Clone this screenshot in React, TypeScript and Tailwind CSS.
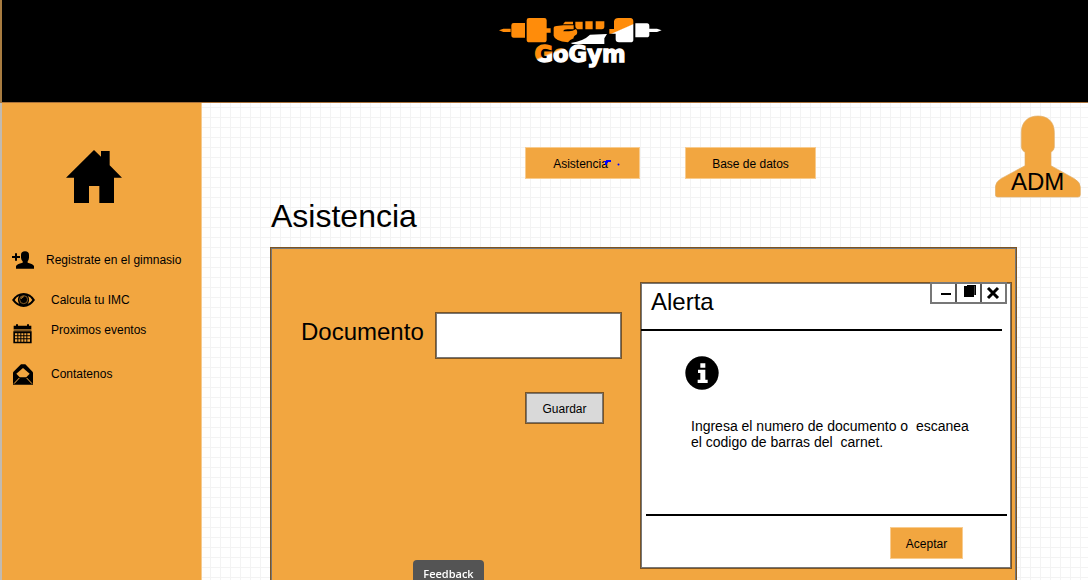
import React from "react";

function Logo() {
  return (
    <svg viewBox="0 0 540 192" className="h-16 w-[180px]" role="img" aria-label="GoGym">
      <defs>
        <linearGradient id="word" gradientUnits="userSpaceOnUse" x1="160" y1="96" x2="200" y2="190">
          <stop offset="0.42" stopColor="#ff8c0a" />
          <stop offset="0.48" stopColor="#fff" />
        </linearGradient>
        <linearGradient id="plate" gradientUnits="userSpaceOnUse" x1="388" y1="40" x2="410" y2="90">
          <stop offset="0.42" stopColor="#ff8c0a" />
          <stop offset="0.48" stopColor="#fff" />
        </linearGradient>
      </defs>
      <g fill="#ff8c0a">
        <path d="M27 67 40 62H62V72H40ZM64 52Q64 45 71 45H105V89H71Q64 89 64 81ZM110 37Q110 30 117 30H163Q170 30 170 37V61H182V74H170V96Q170 103 162 103H118Q110 103 110 96Z" />
        <path d="M191 61Q191 54 200 54L220 52H251V64H233Q220 64 220 70H237Q248 70 258 63Q265 73 259 80Q249 85 251 91Q239 95 234 103Q194 99 191 83Z" />
        <path d="M225 41H249V49H219ZM256 41H278V64H262Q256 61 256 55ZM286 40H308V64H286ZM317 40H343V58Q342 64 336 64H317Z" />
      </g>
      <path fill="#fff" d="M242 105Q281 99 300 80L351 78 343 91V108H248Z" />
      <path fill="url(#plate)" d="M358 63H372V40Q374 30 385 30H421Q430 31 430 40V96Q430 103 421 103H387Q377 103 377 94V77H358Z" />
      <path fill="#fff" d="M436 46H471Q478 46 478 54V62H501L515 67 501 72H478V81Q478 88 470 88H436Z" />
      <text x="270" y="163" textAnchor="middle" fontFamily="DejaVu Sans, sans-serif" fontWeight="700" fontSize="68" fill="url(#word)" stroke="url(#word)" strokeWidth="4">GoGym</text>
    </svg>
  );
}

function HomeIcon() {
  return (
    <svg viewBox="0 0 168 159" className="h-[53px] w-14" aria-hidden="true">
      <path d="M84 0 105 20V3H131V46L168 83H144V159H100V108H69V159H24V83H0Z" />
    </svg>
  );
}

function AddUserIcon() {
  return (
    <svg viewBox="0 0 66 54" className="h-[18px] w-[22px]" aria-hidden="true">
      <path d="M0 15H9V7H15V15H24V21H15V29H9V21H0ZM27 12Q27 1 39 1T51 12V20Q50 28 47 31V35Q64 39 66 45V53H12V45Q14 39 32 35V31Q28 28 27 20Z" />
    </svg>
  );
}

function EyeIcon() {
  return (
    <svg viewBox="0 0 69 42" className="h-3.5 w-[23px]" aria-hidden="true">
      <path d="M0 21Q14 0 35 0T69 21Q55 42 35 42T0 21Z" />
      <path fill="#f2a640" d="M8 21Q13 12 21 9Q14 21 22 33Q13 29 8 21ZM61 21Q56 12 48 9Q55 21 47 33Q56 29 61 21Z" />
      <circle cx="35" cy="20" r="12" fill="none" stroke="#c98a35" strokeWidth="2" />
      <path d="M28 17Q29 11 35 11" fill="none" stroke="#f2a640" strokeWidth="3" />
    </svg>
  );
}

function CalendarIcon() {
  return (
    <svg viewBox="0 0 57 60" className="h-5 w-[19px]" aria-hidden="true">
      <path d="M2 5H9V1H15V5H42V1H48V5H55V16H2Z" />
      <path fill="#7b5420" d="M2 16H55V22H2Z" />
      <path fillRule="evenodd" d="M1 22H56V58H1ZM6 28V34H13V28ZM16 28V34H22V28ZM25 28V34H31V28ZM34 28V34H40V28ZM43 28V34H51V28ZM6 37V43H13V37ZM16 37V43H22V37ZM25 37V43H31V37ZM34 37V43H40V37ZM43 37V43H51V37ZM6 46V53H13V46ZM16 46V53H22V46ZM25 46V53H31V46ZM34 46V53H40V46ZM43 46V53H51V46Z" />
    </svg>
  );
}

function MailIcon() {
  return (
    <svg viewBox="0 0 60 63" className="h-[21px] w-5" aria-hidden="true">
      <path d="M0 25 24 1H37L60 25V62H0Z" />
      <path fill="#f2a640" d="M30 12 50 29 40 40H20L10 29Z" />
      <path stroke="#f2a640" strokeWidth="3" fill="none" d="M3 59 19 42M57 59 41 42" />
    </svg>
  );
}

const edge = "border border-[#7b5424] shadow-[inset_0_0_0_1px_#777]";
const orangeButton = "h-8 border border-[#f8cc90] bg-[#f2a640] pt-0.5 text-xs";

export default function App() {
  return (
    <div className="flex h-screen flex-col overflow-hidden bg-white font-['Liberation_Sans',Arial,sans-serif] text-black">
      <header className="flex h-[103px] shrink-0 justify-center border-b border-l-2 border-b-[#a9713a] border-l-[#a87c40] bg-black pt-2">
        <div className="pl-[70px]">
          <Logo />
        </div>
      </header>

      <div className="flex min-h-0 flex-1">
        <aside className="w-[202px] shrink-0 border-r border-l-2 border-r-[#f5cb91] border-l-[#c2bab0] bg-[#f2a640] pt-[47px] text-xs">
          <a href="#inicio" aria-label="Inicio" className="ml-16 block w-14">
            <HomeIcon />
          </a>
          <nav className="mt-[47px] pl-2.5">
            <a href="#registro" className="flex h-5 items-center">
              <span className="w-[34px]"><AddUserIcon /></span>
              Registrate en el gimnasio
            </a>
            <a href="#imc" className="mt-5 flex h-5 items-center">
              <span className="w-[39px]"><EyeIcon /></span>
              Calcula tu IMC
            </a>
            <a href="#eventos" className="mt-3.5 flex h-5 items-start leading-3">
              <span className="w-[39px] pl-px"><CalendarIcon /></span>
              Proximos eventos
            </a>
            <a href="#contacto" className="mt-5 flex h-5 items-center">
              <span className="w-[39px] pl-px"><MailIcon /></span>
              Contatenos
            </a>
          </nav>
        </aside>

        <main className="flex min-w-0 flex-1 flex-col bg-[linear-gradient(to_right,#f3f3f3_1px,transparent_1px),linear-gradient(to_bottom,#f3f3f3_1px,transparent_1px)] bg-size-[10px_10px] bg-position-[8px_4px]">
          <div className="flex h-[95px] shrink-0 items-start pr-[7px] pl-[323px]">
            <nav className="mt-11 flex gap-[45px]">
              <button className={orangeButton + " relative w-[115px] pr-1"}>
                Asistencia
                <svg viewBox="0 0 18 8" className="absolute top-3 left-[77px] h-2 w-[18px]" aria-hidden="true">
                  <path d="M3 0H8V2H5V3H4V5H2V2H1V1H3Z" fill="#00f" />
                  <circle cx="15.5" cy="4.5" r="1" fill="#00f" />
                </svg>
              </button>
              <button className={orangeButton + " w-[131px]"}>Base de datos</button>
            </nav>
            <a href="#perfil" className="relative mt-3 ml-auto block">
              <svg viewBox="0 0 258 249" className="h-[83px] w-[86px]" aria-hidden="true">
                <path fill="#f2a640" stroke="#dfad68" strokeWidth="2" d="M79 52C79 20 100 3 129 3S178 20 178 52V97Q178 105 168 112V152L238 191Q256 201 256 217V239Q256 246 249 246H8Q1 246 1 239V217Q1 201 18 191L90 152V112Q79 105 79 95Z" />
              </svg>
              <span className="absolute top-[53px] left-4 text-2xl leading-7">ADM</span>
            </a>
          </div>

          <h1 className="ml-[69px] shrink-0 text-[32px] leading-9">Asistencia</h1>

          <section className={edge + " mt-[13px] mr-[71px] ml-[68px] flex min-h-[400px] items-start justify-between bg-[#f2a640] pt-[34px] pr-1 pl-[30px]"}>
            <form className="flex flex-col items-end pt-[30px]" onSubmit={(e) => e.preventDefault()}>
              <div className="flex items-center">
                <label htmlFor="documento" className="mb-2 w-[134px] text-2xl leading-8">Documento</label>
                <input id="documento" type="text" className={edge + " h-[47px] w-[187px] bg-white px-3 text-lg outline-none"} />
              </div>
              <button type="submit" className={edge + " mt-[33px] mr-[18px] h-8 w-[79px] bg-[#d9d9d9] pt-0.5 text-xs"}>Guardar</button>
            </form>

            <div role="dialog" aria-labelledby="alerta" className={edge + " flex h-[287px] w-[372px] flex-col bg-white"}>
              <div className="mr-[9px] flex h-12 shrink-0 items-start justify-between border-b-2 border-black pl-2.5">
                <h2 id="alerta" className="pt-[3px] text-2xl leading-8">Alerta</h2>
                <div className="-mt-px -mr-[5px] flex h-[22px] divide-x-2 divide-[#555] border-2 border-[#777]">
                  <button aria-label="Minimizar" className="flex w-[25px] items-center justify-center pl-1">
                    <svg viewBox="0 0 10 10" className="size-2.5" aria-hidden="true"><path d="M0 5H10V7H0Z" /></svg>
                  </button>
                  <button aria-label="Maximizar" className="flex w-[25px] items-center justify-center pl-0.5">
                    <svg viewBox="0 0 12 14" className="mb-1 h-3.5 w-3" aria-hidden="true">
                      <path fill="#444" d="M3 1H12V11H3Z" />
                      <path d="M3 1H12V2H3ZM11 2H12V11H11ZM0 2H10V13H0Z" />
                    </svg>
                  </button>
                  <button aria-label="Cerrar" className="flex w-[23px] items-center justify-center pr-0.5">
                    <svg viewBox="0 0 14 14" className="size-3.5" aria-hidden="true"><path d="M2 2 12 12M12 2 2 12" stroke="#000" strokeWidth="3" /></svg>
                  </button>
                </div>
              </div>

              <div className="flex-1 pt-[25px] pl-11">
                <svg viewBox="0 0 102 102" className="size-[34px]" aria-hidden="true">
                  <circle cx="51" cy="51" r="50" />
                  <path fill="#fff" d="M46 22H61V35H46ZM39 41H61V71H68V81H38V71H46V51H39Z" />
                </svg>
                <p className="mt-7 pl-1.5 text-sm leading-4 whitespace-pre">{"Ingresa el numero de documento o  escanea\nel codigo de barras del  carnet."}</p>
              </div>

              <div className="mr-1 ml-[5px] flex h-[54px] shrink-0 justify-end border-t-2 border-black pt-[11px] pr-11">
                <button className={orangeButton + " w-[73px]"}>Aceptar</button>
              </div>
            </div>
          </section>
        </main>
      </div>

      <button className="fixed bottom-0 left-[413px] flex h-5 w-[71px] items-end justify-center rounded-t-sm bg-[#545454] font-['Open_Sans',sans-serif] text-[11px] leading-3 font-semibold text-white">
        Feedback
      </button>
    </div>
  );
}
